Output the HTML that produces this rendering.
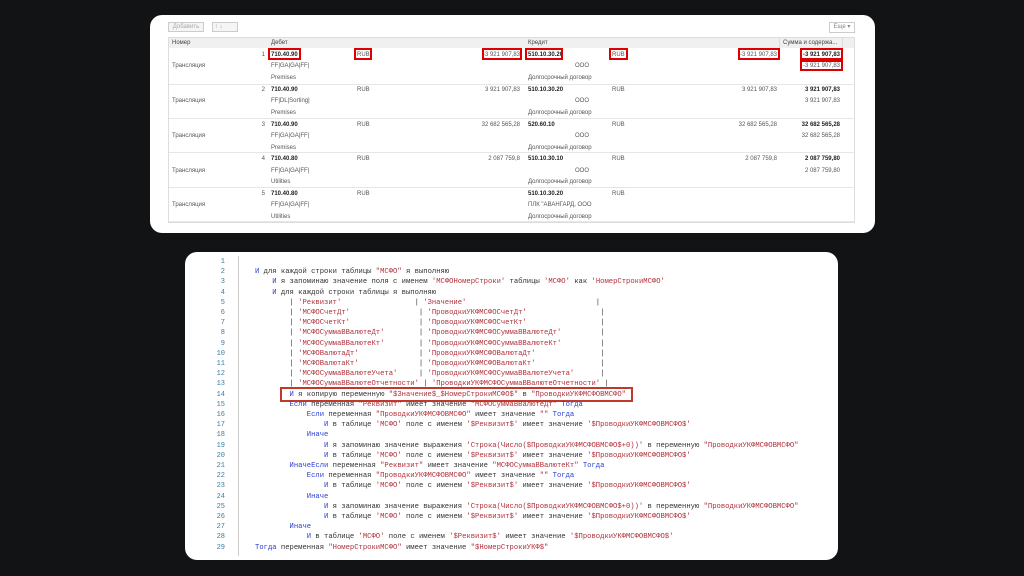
<!DOCTYPE html>
<html><head><meta charset="utf-8"><style>
*{margin:0;padding:0;box-sizing:border-box}
body{width:1024px;height:576px;background:#121315;position:relative;overflow:hidden;font-family:"Liberation Sans",sans-serif}
.p{position:absolute;background:#fff;border-radius:12px}
.t{position:absolute;font-size:6px;color:#555;white-space:nowrap;line-height:8px}
.b{font-weight:bold;color:#222}
.r{text-align:right}
.box{position:absolute;border:2px solid #d00}
.code{position:absolute;left:0;top:0;font-family:"Liberation Mono","DejaVu Sans Mono",monospace;font-size:7.2px;line-height:10.2px;white-space:pre;color:#333}
.ln{position:absolute;left:0;width:40px;text-align:right;color:#3a7ca5;font-family:"Liberation Mono",monospace;font-size:7px;line-height:10.2px;white-space:pre}
.k{color:#2b3fd0}.s{color:#b0303a}
</style></head><body>
<div class="p" style="left:150px;top:15px;width:725px;height:218px"></div>
<div style="position:absolute;left:168px;top:22px;width:36px;height:10px;border:1px solid #ccc;background:#f5f5f5;font-size:6px;color:#aaa;text-align:center;line-height:8px">Добавить</div>
<div style="position:absolute;left:212px;top:22px;width:26px;height:10px;border:1px solid #ccc;background:#f5f5f5;font-size:6px;color:#999;line-height:8px">&nbsp;↑ ↓</div>
<div style="position:absolute;left:829px;top:22px;width:26px;height:11px;border:1px solid #ccc;background:#fff;font-size:6px;color:#888;line-height:9px;text-align:center">Еще ▾</div>
<div style="position:absolute;left:168px;top:37px;width:687px;height:186px;border:1px solid #ddd"></div>
<div style="position:absolute;left:169px;top:38px;width:685px;height:10px;background:#f0f0f0"></div>
<div class="t" style="left:172px;top:39px;color:#444">Номер</div>
<div class="t" style="left:271px;top:39px;color:#444">Дебет</div>
<div class="t" style="left:528px;top:39px;color:#444">Кредит</div>
<div class="t" style="left:783px;top:39px;color:#444">Сумма и содержа...</div>
<div style="position:absolute;left:779px;top:38px;width:1px;height:10px;background:#ddd"></div>
<div style="position:absolute;left:842px;top:38px;width:1px;height:10px;background:#ddd"></div>

<div style="position:absolute;left:169px;top:84px;width:685px;height:1px;background:#e6e6e6"></div>
<div style="position:absolute;left:169px;top:118px;width:685px;height:1px;background:#e6e6e6"></div>
<div style="position:absolute;left:169px;top:152px;width:685px;height:1px;background:#e6e6e6"></div>
<div style="position:absolute;left:169px;top:187px;width:685px;height:1px;background:#e6e6e6"></div>
<div style="position:absolute;left:169px;top:221px;width:685px;height:1px;background:#e6e6e6"></div>

<!-- row1 -->
<div class="t r" style="left:240px;top:51px;width:25px">1</div>
<div class="t b" style="left:271px;top:51px">710.40.90</div>
<div class="t" style="left:357px;top:51px">RUB</div>
<div class="t r" style="left:440px;top:51px;width:80px">-3 921 907,83</div>
<div class="t b" style="left:528px;top:51px">510.10.30.20</div>
<div class="t" style="left:612px;top:51px">RUB</div>
<div class="t r" style="left:697px;top:51px;width:80px">-3 921 907,83</div>
<div class="t b r" style="left:760px;top:51px;width:80px">-3 921 907,83</div>
<div class="t" style="left:172px;top:62px">Трансляция</div>
<div class="t" style="left:271px;top:62px">FF|GA|GA|FF|</div>
<div class="t" style="left:575px;top:62px">ООО</div>
<div class="t r" style="left:760px;top:62px;width:80px">-3 921 907,83</div>
<div class="t" style="left:271px;top:74px">Premises</div>
<div class="t" style="left:528px;top:74px">Долгосрочный договор</div>
<div class="box" style="left:268px;top:48px;width:33px;height:12px"></div>
<div class="box" style="left:354px;top:48px;width:18px;height:12px"></div>
<div class="box" style="left:482px;top:48px;width:40px;height:12px"></div>
<div class="box" style="left:525px;top:48px;width:38px;height:12px"></div>
<div class="box" style="left:609px;top:48px;width:19px;height:12px"></div>
<div class="box" style="left:738px;top:48px;width:42px;height:12px"></div>
<div class="box" style="left:800px;top:48px;width:43px;height:12px"></div>
<div class="box" style="left:800px;top:60px;width:43px;height:11px"></div>

<!-- row2 -->
<div class="t r" style="left:240px;top:86px;width:25px">2</div>
<div class="t b" style="left:271px;top:86px">710.40.90</div>
<div class="t" style="left:357px;top:86px">RUB</div>
<div class="t r" style="left:440px;top:86px;width:80px">3 921 907,83</div>
<div class="t b" style="left:528px;top:86px">510.10.30.20</div>
<div class="t" style="left:612px;top:86px">RUB</div>
<div class="t r" style="left:697px;top:86px;width:80px">3 921 907,83</div>
<div class="t b r" style="left:760px;top:86px;width:80px">3 921 907,83</div>
<div class="t" style="left:172px;top:97px">Трансляция</div>
<div class="t" style="left:271px;top:97px">FF|DL|Sorting|</div>
<div class="t" style="left:575px;top:97px">ООО</div>
<div class="t r" style="left:760px;top:97px;width:80px">3 921 907,83</div>
<div class="t" style="left:271px;top:109px">Premises</div>
<div class="t" style="left:528px;top:109px">Долгосрочный договор</div>

<!-- row3 -->
<div class="t r" style="left:240px;top:121px;width:25px">3</div>
<div class="t b" style="left:271px;top:121px">710.40.90</div>
<div class="t" style="left:357px;top:121px">RUB</div>
<div class="t r" style="left:440px;top:121px;width:80px">32 682 565,28</div>
<div class="t b" style="left:528px;top:121px">520.60.10</div>
<div class="t" style="left:612px;top:121px">RUB</div>
<div class="t r" style="left:697px;top:121px;width:80px">32 682 565,28</div>
<div class="t b r" style="left:760px;top:121px;width:80px">32 682 565,28</div>
<div class="t" style="left:172px;top:132px">Трансляция</div>
<div class="t" style="left:271px;top:132px">FF|GA|GA|FF|</div>
<div class="t" style="left:575px;top:132px">ООО</div>
<div class="t r" style="left:760px;top:132px;width:80px">32 682 565,28</div>
<div class="t" style="left:271px;top:144px">Premises</div>
<div class="t" style="left:528px;top:144px">Долгосрочный договор</div>

<!-- row4 -->
<div class="t r" style="left:240px;top:155px;width:25px">4</div>
<div class="t b" style="left:271px;top:155px">710.40.80</div>
<div class="t" style="left:357px;top:155px">RUB</div>
<div class="t r" style="left:440px;top:155px;width:80px">2 087 759,8</div>
<div class="t b" style="left:528px;top:155px">510.10.30.10</div>
<div class="t" style="left:612px;top:155px">RUB</div>
<div class="t r" style="left:697px;top:155px;width:80px">2 087 759,8</div>
<div class="t b r" style="left:760px;top:155px;width:80px">2 087 759,80</div>
<div class="t" style="left:172px;top:167px">Трансляция</div>
<div class="t" style="left:271px;top:167px">FF|GA|GA|FF|</div>
<div class="t" style="left:575px;top:167px">ООО</div>
<div class="t r" style="left:760px;top:167px;width:80px">2 087 759,80</div>
<div class="t" style="left:271px;top:178px">Utilities</div>
<div class="t" style="left:528px;top:178px">Долгосрочный договор</div>

<!-- row5 -->
<div class="t r" style="left:240px;top:190px;width:25px">5</div>
<div class="t b" style="left:271px;top:190px">710.40.80</div>
<div class="t" style="left:357px;top:190px">RUB</div>
<div class="t b" style="left:528px;top:190px">510.10.30.20</div>
<div class="t" style="left:612px;top:190px">RUB</div>
<div class="t" style="left:172px;top:201px">Трансляция</div>
<div class="t" style="left:271px;top:201px">FF|GA|GA|FF|</div>
<div class="t" style="left:528px;top:201px">ПЛК "АВАНГАРД, ООО</div>
<div class="t" style="left:271px;top:213px">Utilities</div>
<div class="t" style="left:528px;top:213px">Долгосрочный договор</div>

<!-- code panel -->
<div class="p" style="left:185px;top:252px;width:653px;height:308px;overflow:hidden">
<div style="position:absolute;left:53px;top:4px;width:1px;height:300px;background:#ccc"></div>
<div class="ln" style="top:5px;">1
2
3
4
5
6
7
8
9
10
11
12
13
14
15
16
17
18
19
20
21
22
23
24
25
26
27
28
29</div>
<div style="position:absolute;left:95px;top:135px;width:353px;height:15px;border:2px solid #c0392b"></div>
<div class="code" style="left:70px;top:5px">
<span class="k">И</span> для каждой строки таблицы <span class="s">"МСФО"</span> я выполняю
    <span class="k">И</span> я запоминаю значение поля с именем <span class="s">'МСФОНомерСтроки'</span> таблицы <span class="s">'МСФО'</span> как <span class="s">'НомерСтрокиМСФО'</span>
    <span class="k">И</span> для каждой строки таблицы я выполняю
        | <span class="s">'Реквизит'</span>                 | <span class="s">'Значение'</span>                              |
        | <span class="s">'МСФОСчетДт'</span>                | <span class="s">'ПроводкиУКФМСФОСчетДт'</span>                 |
        | <span class="s">'МСФОСчетКт'</span>                | <span class="s">'ПроводкиУКФМСФОСчетКт'</span>                 |
        | <span class="s">'МСФОСуммаВВалютеДт'</span>        | <span class="s">'ПроводкиУКФМСФОСуммаВВалютеДт'</span>         |
        | <span class="s">'МСФОСуммаВВалютеКт'</span>        | <span class="s">'ПроводкиУКФМСФОСуммаВВалютеКт'</span>         |
        | <span class="s">'МСФОВалютаДт'</span>              | <span class="s">'ПроводкиУКФМСФОВалютаДт'</span>               |
        | <span class="s">'МСФОВалютаКт'</span>              | <span class="s">'ПроводкиУКФМСФОВалютаКт'</span>               |
        | <span class="s">'МСФОСуммаВВалютеУчета'</span>     | <span class="s">'ПроводкиУКФМСФОСуммаВВалютеУчета'</span>      |
        | <span class="s">'МСФОСуммаВВалютеОтчетности'</span> | <span class="s">'ПроводкиУКФМСФОСуммаВВалютеОтчетности'</span> |
        <span class="k">И</span> я копирую переменную <span class="s">"$Значение$_$НомерСтрокиМСФО$"</span> в <span class="s">"ПроводкиУКФМСФОВМСФО"</span>
        <span class="k">Если</span> переменная <span class="s">"Реквизит"</span> имеет значение <span class="s">"МСФОСуммаВВалютеДт"</span> <span class="k">Тогда</span>
            <span class="k">Если</span> переменная <span class="s">"ПроводкиУКФМСФОВМСФО"</span> имеет значение <span class="s">""</span> <span class="k">Тогда</span>
                <span class="k">И</span> в таблице <span class="s">'МСФО'</span> поле с именем <span class="s">'$Реквизит$'</span> имеет значение <span class="s">'$ПроводкиУКФМСФОВМСФО$'</span>
            <span class="k">Иначе</span>
                <span class="k">И</span> я запоминаю значение выражения <span class="s">'Строка(Число($ПроводкиУКФМСФОВМСФО$+0))'</span> в переменную <span class="s">"ПроводкиУКФМСФОВМСФО"</span>
                <span class="k">И</span> в таблице <span class="s">'МСФО'</span> поле с именем <span class="s">'$Реквизит$'</span> имеет значение <span class="s">'$ПроводкиУКФМСФОВМСФО$'</span>
        <span class="k">ИначеЕсли</span> переменная <span class="s">"Реквизит"</span> имеет значение <span class="s">"МСФОСуммаВВалютеКт"</span> <span class="k">Тогда</span>
            <span class="k">Если</span> переменная <span class="s">"ПроводкиУКФМСФОВМСФО"</span> имеет значение <span class="s">""</span> <span class="k">Тогда</span>
                <span class="k">И</span> в таблице <span class="s">'МСФО'</span> поле с именем <span class="s">'$Реквизит$'</span> имеет значение <span class="s">'$ПроводкиУКФМСФОВМСФО$'</span>
            <span class="k">Иначе</span>
                <span class="k">И</span> я запоминаю значение выражения <span class="s">'Строка(Число($ПроводкиУКФМСФОВМСФО$+0))'</span> в переменную <span class="s">"ПроводкиУКФМСФОВМСФО"</span>
                <span class="k">И</span> в таблице <span class="s">'МСФО'</span> поле с именем <span class="s">'$Реквизит$'</span> имеет значение <span class="s">'$ПроводкиУКФМСФОВМСФО$'</span>
        <span class="k">Иначе</span>
            <span class="k">И</span> в таблице <span class="s">'МСФО'</span> поле с именем <span class="s">'$Реквизит$'</span> имеет значение <span class="s">'$ПроводкиУКФМСФОВМСФО$'</span>
<span class="k">Тогда</span> переменная <span class="s">"НомерСтрокиМСФО"</span> имеет значение <span class="s">"$НомерСтрокиУКФ$"</span></div>
</div>
</body></html>
